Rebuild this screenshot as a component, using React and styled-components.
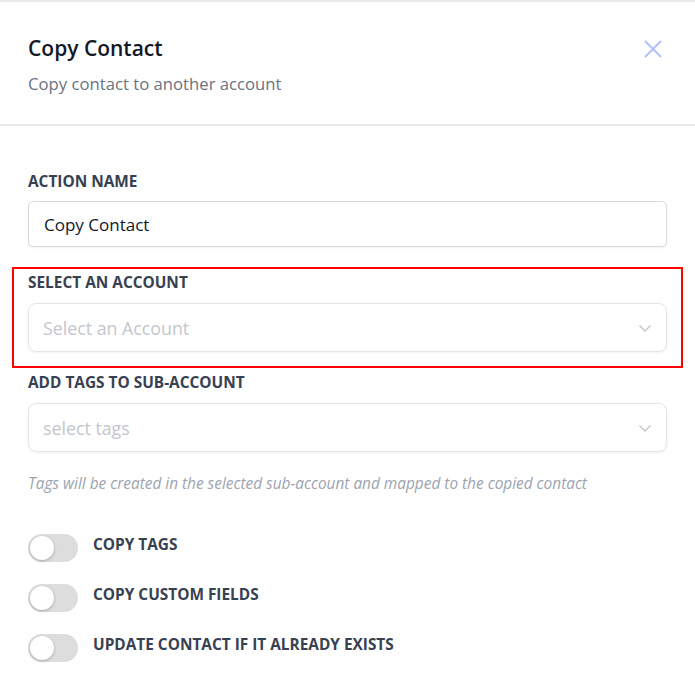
import styled, { createGlobalStyle } from "styled-components";

const GlobalStyle = createGlobalStyle`
  * { box-sizing: border-box; }
  body {
    margin: 0;
    background: #fff;
    font-family: "Open Sans", "Noto Sans", sans-serif;
    color: #111827;
  }
`;

const Panel = styled.div`
  width: 695px;
  min-height: 674px;
  border-top: 2px solid #e9eaee;
  background: #fff;
`;

const Header = styled.div`
  display: flex;
  justify-content: space-between;
  align-items: flex-start;
  padding: 32px 28px 0 28px;
  height: 124px;
  border-bottom: 2px solid #e8e8e8;
`;

const Title = styled.h2`
  margin: 0;
  font-size: 21px;
  line-height: 28px;
  font-weight: 600;
  color: #111827;
`;

const Subtitle = styled.p`
  margin: 10px 0 0;
  font-size: 16.7px;
  line-height: 24px;
  color: #6b7280;
`;

const CloseButton = styled.button`
  border: none;
  background: none;
  padding: 0;
  margin: 5px 4px 0 0;
  cursor: pointer;
  display: flex;
  color: #b4c0fb;
`;

const Body = styled.div`
  padding: 46px 28px 0;
`;

const Field = styled.div`
  display: flex;
  flex-direction: column;
  margin-bottom: ${(p) => p.$gap || 0}px;
`;

const Highlight = styled.div`
  margin: 0 -16px 5px;
  padding: 4px 14px 14px;
  border: 2px solid #ff0000;
`;

const Label = styled.label`
  font-size: 15.4px;
  line-height: 20px;
  font-weight: 700;
  color: #374151;
  text-transform: uppercase;
  margin-bottom: ${(p) => p.$gap || 10}px;
`;

const TextInput = styled.input`
  height: 46px;
  width: 100%;
  padding: 0 15px;
  border: 1px solid #d8d9dd;
  border-radius: 5px;
  box-shadow: 0 1px 2px rgba(0, 0, 0, 0.06);
  font-family: inherit;
  font-size: 17px;
  color: #111827;
  outline: none;
`;

const SelectBox = styled.div`
  height: 49px;
  display: flex;
  align-items: center;
  justify-content: space-between;
  padding: 1px 14px 0 14px;
  border: 1px solid #e4e5ea;
  border-radius: 8px;
  box-shadow: 0 1px 3px rgba(0, 0, 0, 0.06);
  font-size: 17.8px;
  color: #c3c6cd;
  cursor: pointer;
`;

const Hint = styled.p`
  margin: 21px 0 0;
  font-size: 15.4px;
  line-height: 22px;
  font-style: italic;
  color: #9ca3af;
`;

const ToggleList = styled.div`
  display: flex;
  flex-direction: column;
  gap: 22px;
  margin-top: 39px;
`;

const ToggleRow = styled.div`
  display: flex;
  align-items: center;
  gap: 15px;
`;

const Track = styled.span`
  position: relative;
  width: 50px;
  height: 28px;
  border-radius: 14px;
  background: #dddddd;
  flex-shrink: 0;
`;

const Knob = styled.span`
  position: absolute;
  left: 2px;
  top: 2px;
  width: 24px;
  height: 24px;
  border-radius: 50%;
  background: #fff;
  box-shadow: 0 1px 3px rgba(0, 0, 0, 0.25);
`;

const ToggleLabel = styled.span`
  font-size: 15.4px;
  line-height: 20px;
  font-weight: 700;
  color: #374151;
  text-transform: uppercase;
  margin-bottom: 6px;
`;

function Chevron() {
  return (
    <svg width="14" height="14" viewBox="0 0 14 14" fill="none">
      <path d="M1.5 4.5 7 10l5.5-5.5" stroke="#c0c4cc" strokeWidth="1.3" />
    </svg>
  );
}

function Toggle({ label }) {
  return (
    <ToggleRow>
      <Track>
        <Knob />
      </Track>
      <ToggleLabel>{label}</ToggleLabel>
    </ToggleRow>
  );
}

export default function App() {
  return (
    <>
      <GlobalStyle />
      <Panel>
        <Header>
          <div>
            <Title>Copy Contact</Title>
            <Subtitle>Copy contact to another account</Subtitle>
          </div>
          <CloseButton aria-label="Close">
            <svg width="20" height="20" viewBox="0 0 20 20" fill="none">
              <path d="M2 2l16 16M18 2 2 18" stroke="currentColor" strokeWidth="2" />
            </svg>
          </CloseButton>
        </Header>
        <Body>
          <Field $gap={20}>
            <Label $gap={9}>Action Name</Label>
            <TextInput defaultValue="Copy Contact" />
          </Field>
          <Highlight>
            <Field>
              <Label>Select an Account</Label>
              <SelectBox>
                Select an Account
                <Chevron />
              </SelectBox>
            </Field>
          </Highlight>
          <Field>
            <Label>Add tags to sub-account</Label>
            <SelectBox>
              select tags
              <Chevron />
            </SelectBox>
          </Field>
          <Hint>
            Tags will be created in the selected sub-account and mapped to the
            copied contact
          </Hint>
          <ToggleList>
            <Toggle label="Copy Tags" />
            <Toggle label="Copy Custom Fields" />
            <Toggle label="Update contact if it already exists" />
          </ToggleList>
        </Body>
      </Panel>
    </>
  );
}
